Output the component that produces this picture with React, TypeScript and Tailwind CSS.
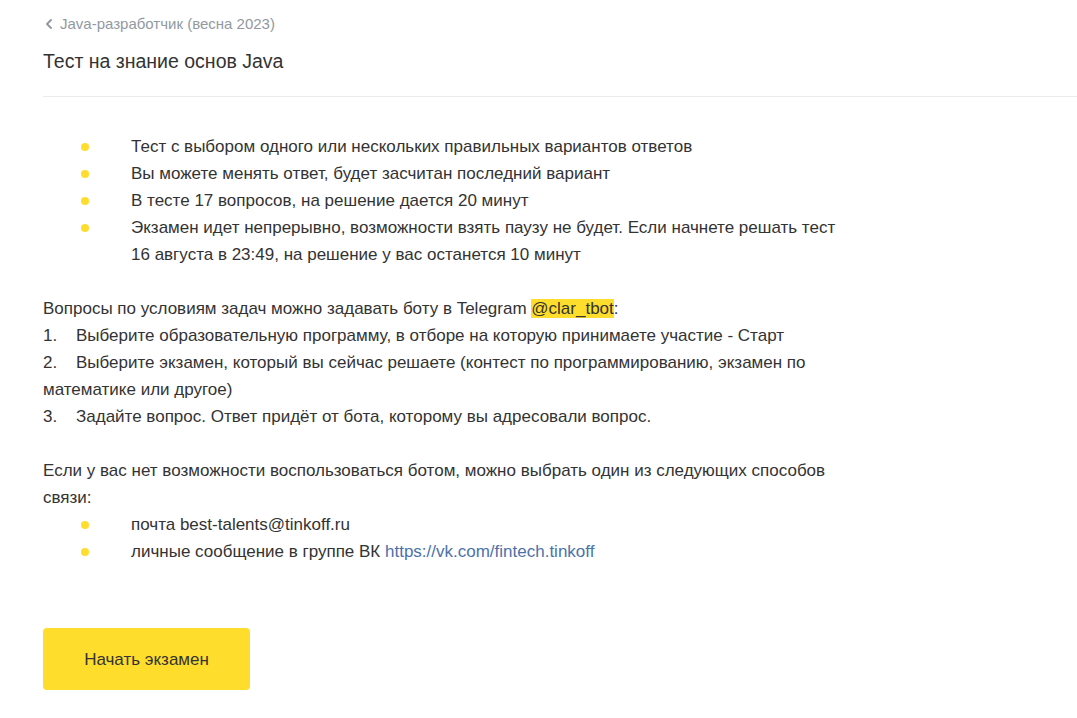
import { ChevronLeft } from "lucide-react"

const rules = [
  "Тест с выбором одного или нескольких правильных вариантов ответов",
  "Вы можете менять ответ, будет засчитан последний вариант",
  "В тесте 17 вопросов, на решение дается 20 минут",
  "Экзамен идет непрерывно, возможности взять паузу не будет. Если начнете решать тест 16 августа в 23:49, на решение у вас останется 10 минут",
]

const steps = [
  "Выберите образовательную программу, в отборе на которую принимаете участие - Старт",
  "Выберите экзамен, который вы сейчас решаете (контест по программированию, экзамен по математике или другое)",
  "Задайте вопрос. Ответ придёт от бота, которому вы адресовали вопрос.",
]

function Bullet({ children }: { children: React.ReactNode }) {
  return (
    <li className="flex">
      <span className="w-[88px] shrink-0 flex items-start pl-[38px] pt-[10px]">
        <span className="block w-2 h-2 rounded-full bg-[#ffdd2d]" />
      </span>
      <span>{children}</span>
    </li>
  )
}

export default function App() {
  return (
    <div className="min-h-[718px] bg-white text-[#333333] font-['Liberation_Sans',Arial,sans-serif]">
      <div className="pl-[43px]">
        {/* Header */}
        <div className="pt-[15px]">
          <a className="flex items-center gap-[3px] text-[15px] leading-[18px] text-[#9299a2]">
            <ChevronLeft className="w-[16px] h-[16px] -ml-[2px]" strokeWidth={3} />
            Java-разработчик (весна 2023)
          </a>
          <h1 className="mt-[15px] text-[19.5px] leading-[26px] text-[#333333]">Тест на знание основ Java</h1>
        </div>
        <div className="mt-[22px] border-t border-[#ebebeb]" />

        {/* Body */}
        <div className="max-w-[800px] text-[17px] leading-[27px] pt-[36px]">
          <ul>
            {rules.map((r) => (
              <Bullet key={r}>{r}</Bullet>
            ))}
          </ul>

          <p className="mt-[27px]">
            Вопросы по условиям задач можно задавать боту в Telegram{" "}
            <span className="bg-[#ffdd2d]">@clar_tbot</span>:
          </p>
          {steps.map((s, i) => (
            <p key={s}>
              <span className="inline-block w-[33px]">{i + 1}.</span>
              {s}
            </p>
          ))}

          <p className="mt-[27px]">
            Если у вас нет возможности воспользоваться ботом, можно выбрать один из следующих способов связи:
          </p>
          <ul>
            <Bullet>почта best-talents@tinkoff.ru</Bullet>
            <Bullet>
              личные сообщение в группе ВК{" "}
              <a className="text-[#4d72a8]">https://vk.com/fintech.tinkoff</a>
            </Bullet>
          </ul>

          <button className="mt-[63px] w-[207px] h-[62px] rounded-[4px] bg-[#ffdd2d] text-[17px] text-[#333333]">
            Начать экзамен
          </button>
        </div>
      </div>
    </div>
  )
}
